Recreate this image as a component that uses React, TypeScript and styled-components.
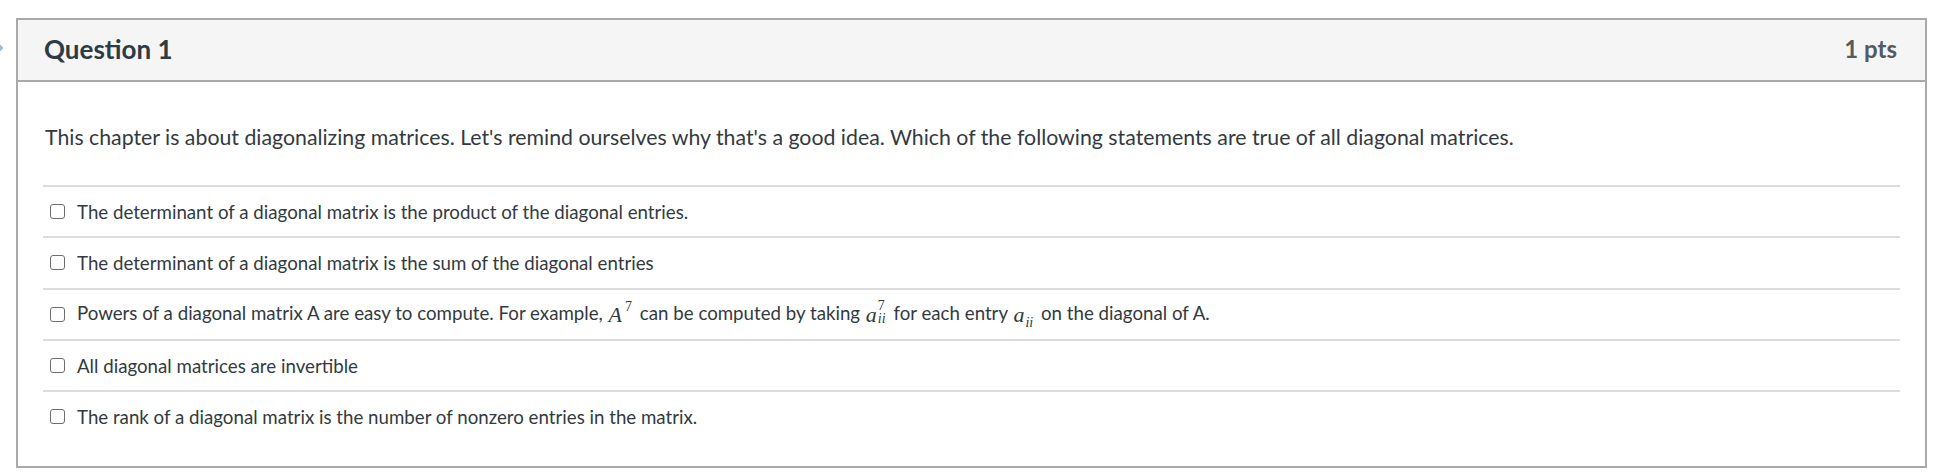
import React from 'react'
import styled, { createGlobalStyle } from 'styled-components'

const GlobalStyle = createGlobalStyle`
  html, body {
    margin: 0;
    padding: 0;
    background: #ffffff;
  }
  body {
    font-family: Lato, "Open Sans", "Liberation Sans", sans-serif;
    color: #2d3b45;
  }
`

const Page = styled.div`
  padding: 18px 11px 6px 16px;
`

const QuestionCard = styled.div`
  position: relative;
  border: 2px solid #a9a9a9;
  background: #ffffff;
`

const Flag = styled.div`
  position: absolute;
  left: -25px;
  top: 21px;
  display: flex;
`

const Header = styled.div`
  box-sizing: border-box;
  height: 62px;
  background: #f5f5f5;
  border-bottom: 2px solid #a9a9a9;
  display: flex;
  align-items: center;
  justify-content: space-between;
  padding: 0 28px 3px 26px;
`

const Title = styled.div`
  font-size: 26px;
  font-weight: 700;
  color: #2d3b45;
`

const Points = styled.div`
  font-size: 24px;
  font-weight: 700;
  color: #555a5e;
`

const Body = styled.div`
  padding: 40px 25px 25px 25px;
`

const QuestionText = styled.div`
  font-size: 21.3px;
  line-height: 30px;
  color: #333a40;
  margin: 0 0 33px 2px;
`

const AnswerList = styled.div`
  display: flex;
  flex-direction: column;
`

const AnswerRow = styled.label`
  display: flex;
  align-items: center;
  gap: 12px;
  height: 49.3px;
  border-top: 2px solid #dcdcdc;
  padding-left: 7px;
`

const Check = styled.input`
  appearance: none;
  margin: 0;
  width: 15px;
  height: 15px;
  border: 1.5px solid #6e6e6e;
  border-radius: 3px;
  background: #fff;
  flex-shrink: 0;
`

const AnswerText = styled.span`
  font-size: 18.7px;
  color: #333a40;
  white-space: nowrap;
`

const MathVar = styled.span`
  font-family: "Liberation Serif", "DejaVu Serif", serif;
  font-style: italic;
  font-size: 22px;
  display: inline-flex;
  align-items: flex-start;
  vertical-align: middle;
  line-height: 1;
  margin: 0 3px 0 1px;
`

const Sup = styled.span`
  font-style: normal;
  font-size: 14px;
  margin-left: 3px;
  margin-top: -4px;
`

const Sub = styled.span`
  font-size: 14px;
  margin-left: 1px;
  align-self: flex-end;
  margin-bottom: -4px;
`

const Scripts = styled.span`
  display: inline-flex;
  flex-direction: column;
  font-size: 14px;
  line-height: 13px;
  margin-left: 1px;
  margin-top: -5px;
  margin-bottom: -6px;
  span:first-child {
    font-style: normal;
  }
`

type Answer = { id: number; content: React.ReactNode }

const answers: Answer[] = [
  { id: 1, content: 'The determinant of a diagonal matrix is the product of the diagonal entries.' },
  { id: 2, content: 'The determinant of a diagonal matrix is the sum of the diagonal entries' },
  {
    id: 3,
    content: (
      <>
        Powers of a diagonal matrix A are easy to compute. For example,{' '}
        <MathVar>
          A<Sup>7</Sup>
        </MathVar>{' '}
        can be computed by taking{' '}
        <MathVar>
          a
          <Scripts>
            <span>7</span>
            <span>ii</span>
          </Scripts>
        </MathVar>{' '}
        for each entry{' '}
        <MathVar>
          a<Sub>ii</Sub>
        </MathVar>{' '}
        on the diagonal of A.
      </>
    ),
  },
  { id: 4, content: 'All diagonal matrices are invertible' },
  { id: 5, content: 'The rank of a diagonal matrix is the number of nonzero entries in the matrix.' },
]

const App = () => {
  return (
    <Page>
      <GlobalStyle />
      <QuestionCard>
        <Flag>
          <svg width="12" height="14" viewBox="0 0 12 14">
            <path d="M3 1 L9 7 L3 13" fill="none" stroke="#9fb6cf" strokeWidth="2" />
          </svg>
        </Flag>
        <Header>
          <Title>Question 1</Title>
          <Points>1 pts</Points>
        </Header>
        <Body>
          <QuestionText>
            This chapter is about diagonalizing matrices. Let's remind ourselves why that's a good idea.
            Which of the following statements are true of all diagonal matrices.
          </QuestionText>
          <AnswerList>
            {answers.map((a) => (
              <AnswerRow key={a.id}>
                <Check type="checkbox" />
                <AnswerText>{a.content}</AnswerText>
              </AnswerRow>
            ))}
          </AnswerList>
        </Body>
      </QuestionCard>
    </Page>
  )
}

export default App
